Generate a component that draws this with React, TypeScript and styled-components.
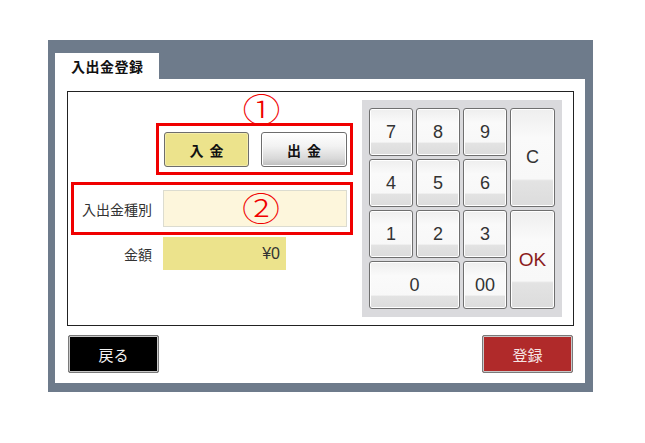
import React from "react";
import styled, { createGlobalStyle, css } from "styled-components";

const GlobalStyle = createGlobalStyle`
  html, body { margin: 0; padding: 0; background: #ffffff; }
  body { font-family: "Noto Sans CJK JP", "Noto Sans", sans-serif; color: #222; }
  * { box-sizing: border-box; }
`;

const Page = styled.div`
  width: 645px;
  height: 443px;
  padding: 40px 0 0 48px;
`;

const Frame = styled.div`
  width: 545px;
  height: 352px;
  background: #6e7b8b;
  padding: 13px 8px 9px 7px;
  display: flex;
  flex-direction: column;
`;

const TabBar = styled.div`
  display: flex;
  height: 26px;
`;

const Tab = styled.div`
  width: 104px;
  height: 26px;
  background: #ffffff;
  padding-left: 16px;
  display: flex;
  align-items: center;
  font-size: 14px;
  font-weight: 700;
  letter-spacing: 0.5px;
  color: #111;
`;

const Panel = styled.div`
  flex: 1;
  background: #ffffff;
  padding: 12px 11px 10px 12px;
  display: flex;
  flex-direction: column;
`;

const Box = styled.div`
  height: 235px;
  border: 1px solid #222;
  display: flex;
`;

const LeftCol = styled.div`
  width: 294px;
  display: flex;
  flex-direction: column;
`;

const MarkRow = styled.div`
  align-self: flex-end;
  width: 197px;
  margin-right: 9px;
  height: 31px;
  padding-left: 14px;
  display: flex;
  align-items: center;
  justify-content: center;
`;

const Mark = styled.span<{ $overlay?: boolean }>`
  display: inline-block;
  color: #f00000;
  font-size: 38px;
  font-weight: 300;
  line-height: 1;
  font-family: "Noto Sans CJK JP", sans-serif;
  transform: scaleY(0.86);
  ${(p) =>
    p.$overlay &&
    css`
      position: absolute;
      left: 168px;
      top: 50%;
      transform: translateY(-54%) scaleY(0.86);
    `}
`;

const RedBox = styled.div`
  border: 3px solid #f00000;
`;

const TypeBox = styled(RedBox)`
  align-self: flex-end;
  margin-right: 9px;
  width: 197px;
  height: 52px;
  padding: 6px 0 0 5px;
  display: flex;
  gap: 12px;
`;

const TypeButton = styled.div<{ $active?: boolean; $w: number }>`
  width: ${(p) => p.$w}px;
  height: 35px;
  border: 1px solid #6d6d6d;
  border-radius: 3px;
  display: flex;
  align-items: center;
  justify-content: center;
  font-size: 14px;
  font-weight: 700;
  word-spacing: 3px;
  color: #111;
  background: ${(p) =>
    p.$active
      ? "#ece38c"
      : "linear-gradient(#ffffff 0%, #f2f2f2 40%, #d8d8d8 78%, #bcbcbc 100%)"};
  box-shadow: inset 0 0 0 1px ${(p) => (p.$active ? "#f3ecaa" : "#ffffff")};
`;

const KindBox = styled(RedBox)`
  position: relative;
  margin: 7px 0 0 3px;
  width: 282px;
  height: 53px;
  padding-top: 5px;
`;

const FieldRow = styled.div<{ $amount?: boolean }>`
  display: grid;
  grid-template-columns: 78px ${(p) => (p.$amount ? "123px" : "184px")};
  column-gap: 11px;
  align-items: center;
  ${(p) =>
    p.$amount &&
    css`
      margin: 2px 0 0 6px;
    `}
`;

const Label = styled.div`
  text-align: right;
  font-size: 14px;
  color: #333;
`;

const CreamInput = styled.div`
  height: 37px;
  background: #fdf6dc;
  border: 1px solid #dcdcd0;
`;

const AmountBox = styled.div`
  height: 33px;
  background: #ece38c;
  display: flex;
  align-items: center;
  justify-content: flex-end;
  padding-right: 6px;
  font-family: "Liberation Sans", Arial, sans-serif;
  font-size: 16px;
  color: #333;
`;

const Keypad = styled.div`
  margin-top: 8px;
  width: 200px;
  height: 217px;
  background: #dadadd;
  padding: 8px 7px;
  display: grid;
  grid-template-columns: 44px 44px 44px 45px;
  grid-template-rows: repeat(4, 48px);
  gap: 3px;
`;

const Key = styled.div<{ $col?: string; $row?: string; $ok?: boolean }>`
  grid-column: ${(p) => p.$col || "auto"};
  grid-row: ${(p) => p.$row || "auto"};
  border: 1px solid #6f6f6f;
  border-radius: 3px;
  background: linear-gradient(
    #eeeeee 0%,
    #fafafa 30%,
    #f8f8f8 72%,
    #e3e3e3 74%,
    #dcdcdc 100%
  );
  box-shadow: inset 0 0 0 1px #ffffff;
  display: flex;
  align-items: center;
  justify-content: center;
  font-family: "Liberation Sans", Arial, sans-serif;
  font-size: ${(p) => (p.$ok ? "19px" : "18px")};
  color: ${(p) => (p.$ok ? "#8b1c1c" : "#333")};
`;

const Footer = styled.div`
  margin-top: 9px;
  padding: 0 1px;
  display: flex;
  justify-content: space-between;
`;

const FooterButton = styled.div<{ $variant: "back" | "register" }>`
  width: 91px;
  height: 38px;
  border: 1px solid #7a7a7a;
  border-radius: 2px;
  box-shadow: inset 0 0 0 1px #c8c8c8;
  display: flex;
  align-items: center;
  justify-content: center;
  font-size: 15px;
  background: ${(p) => (p.$variant === "back" ? "#000000" : "#b02a2a")};
  color: ${(p) => (p.$variant === "back" ? "#f2f2f2" : "#f6e4e4")};
`;

const keys: { label: string; col?: string; row?: string; ok?: boolean }[] = [
  { label: "7" },
  { label: "8" },
  { label: "9" },
  { label: "C", col: "4", row: "1 / span 2", ok: false },
  { label: "4" },
  { label: "5" },
  { label: "6" },
  { label: "1" },
  { label: "2" },
  { label: "3" },
  { label: "OK", col: "4", row: "3 / span 2", ok: true },
  { label: "0", col: "1 / span 2" },
  { label: "00" },
];

export default function App() {
  return (
    <>
      <GlobalStyle />
      <Page>
        <Frame>
          <TabBar>
            <Tab>入出金登録</Tab>
          </TabBar>
          <Panel>
            <Box>
              <LeftCol>
                <MarkRow>
                  <Mark>①</Mark>
                </MarkRow>
                <TypeBox>
                  <TypeButton $active $w={85}>入 金</TypeButton>
                  <TypeButton $w={86}>出 金</TypeButton>
                </TypeBox>
                <KindBox>
                  <FieldRow>
                    <Label>入出金種別</Label>
                    <CreamInput />
                  </FieldRow>
                  <Mark $overlay>②</Mark>
                </KindBox>
                <FieldRow $amount>
                  <Label>金額</Label>
                  <AmountBox>¥0</AmountBox>
                </FieldRow>
              </LeftCol>
              <Keypad>
                {keys.map((k) => (
                  <Key key={k.label} $col={k.col} $row={k.row} $ok={k.ok}>
                    {k.label}
                  </Key>
                ))}
              </Keypad>
            </Box>
            <Footer>
              <FooterButton $variant="back">戻る</FooterButton>
              <FooterButton $variant="register">登録</FooterButton>
            </Footer>
          </Panel>
        </Frame>
      </Page>
    </>
  );
}
